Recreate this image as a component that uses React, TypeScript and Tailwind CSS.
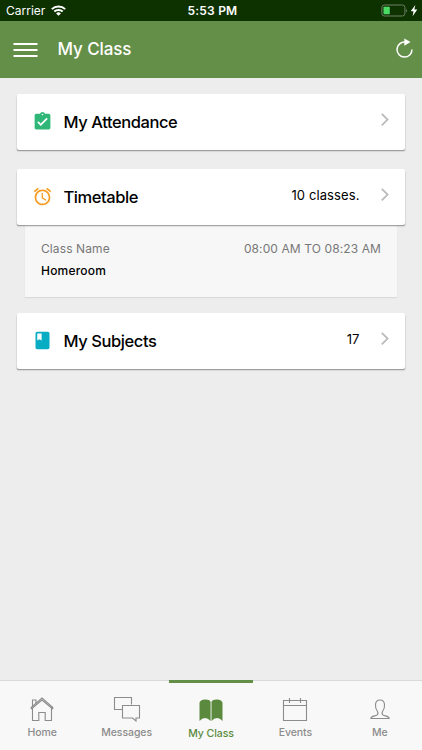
import type { ReactNode } from "react";
import { MdAlarm, MdAssignmentTurnedIn, MdClass } from "react-icons/md";

function Chevron() {
  return (
    <svg className="ml-[20.5px] mt-[18px] h-[15px] w-[10px] shrink-0" viewBox="0 0 10 15" fill="none" stroke="#b9b9b9" strokeWidth="1.7">
      <path d="M1.8 1.8 7.6 7.6 1.8 13.4" />
    </svg>
  );
}

function Card({ icon, title, value }: { icon: ReactNode; title: string; value?: string }) {
  return (
    <section className="relative flex h-[56px] items-start rounded-[2px] bg-white pl-[15.5px] pr-[15px] shadow-[0_1.5px_1.5px_-0.5px_rgba(0,0,0,0.42)]">
      <span className="mt-[17px] flex h-[21px] w-[21px] shrink-0">{icon}</span>
      <h2 className="ml-[10.5px] mt-[16px] flex-1 whitespace-nowrap text-[16.5px] font-[450] leading-[24px] tracking-[-0.42px] text-black">{title}</h2>
      {value && <span className="mt-[16px] whitespace-nowrap text-[13px] leading-[20px] tracking-[0.1px] text-black">{value}</span>}
      <Chevron />
    </section>
  );
}

function Tab({ label, children, active = false }: { label: string; children: ReactNode; active?: boolean }) {
  return (
    <button className={active ? "-mt-px flex flex-1 flex-col items-center border-t-[3px] border-[#648f49] pt-[12px] text-[#5b8a3e]" : "flex flex-1 flex-col items-center pt-[13px] text-[#8c8c8c]"}>
      <svg className="h-[28px] w-[28px]" viewBox="0 0 28 28" fill="none" stroke="currentColor" strokeWidth="1.1">
        {children}
      </svg>
      <span className="mt-[4px] whitespace-nowrap text-[10.5px] font-medium leading-[14px] tracking-[-0.05px]">{label}</span>
    </button>
  );
}

export default function App() {
  return (
    <div className="flex h-[750px] w-[422px] flex-col overflow-hidden bg-[#ededed] font-['Inter','Liberation_Sans',sans-serif] text-[#111]">
      <div className="grid h-[21px] shrink-0 grid-cols-3 items-center bg-[#0d3200] text-[12px] text-white">
        <div className="flex items-center pl-[6px]">
          <span>Carrier</span>
          <svg className="ml-[6px] h-[11px] w-[15px]" viewBox="0 0 15 11" fill="none" stroke="white" strokeWidth="2">
            <path d="M.8 4.1a9.6 9.6 0 0 1 13.4 0M3.3 6.6a6.1 6.1 0 0 1 8.4 0" />
            <path d="M7.5 10.8 5.1 8.4a3.5 3.5 0 0 1 4.8 0Z" fill="white" stroke="none" />
          </svg>
        </div>
        <span className="whitespace-nowrap pl-[3px] text-center text-[12px] font-semibold tracking-[0.2px]">5:53 PM</span>
        <div className="flex items-center justify-end pr-[4px]">
          <svg className="h-[13px] w-[37px]" viewBox="0 0 37 13">
            <rect x=".9" y="1" width="23" height="11" rx="2.5" fill="none" stroke="#6d8068" />
            <rect x="2.5" y="2.7" width="6.3" height="7.5" rx=".7" fill="#4cd964" />
            <path d="M25.2 4.5q1.800 2 0 4Z" fill="#6d8068" />
            <path d="M34.3 1 29.700 7.200h2.800l-.9 5L36.300 5.500h-2.900Z" fill="white" />
          </svg>
        </div>
      </div>
      <header className="flex h-[57px] shrink-0 items-center bg-[#648f49] pl-[13px] pr-[9px] text-white">
        <svg className="h-[16px] w-[25px]" viewBox="0 0 25 16" stroke="white" strokeWidth="1.8">
          <path d="M.5 2h24M.5 8h24M.5 14h24" />
        </svg>
        <h1 className="-mt-px ml-[19.5px] flex-1 text-[17px] font-medium leading-[24px] tracking-[-0.1px]">My Class</h1>
        <svg className="mt-[-3px] h-[20px] w-[18px]" viewBox="0 0 18 20" fill="none" stroke="white" strokeWidth="1.5">
          <path d="M9.8 4.1A7.500 7.500 0 1 0 17 11.600" />
          <path d="M9.300.6 15.500 4.100 9.300 7.700Z" fill="white" stroke="none" />
        </svg>
      </header>
      <main className="flex flex-1 flex-col pl-[16.5px] pr-[17px] pt-[16px]">
        <Card icon={<MdAssignmentTurnedIn size={21} color="#30b777" />} title="My Attendance" />
        <div className="mt-[19px]">
          <Card icon={<MdAlarm size={21} color="#f59d22" />} title="Timetable" value="10 classes." />
          <div className="mx-[8px] h-[71.5px] bg-[#f7f7f7] pl-[16.5px] pr-[16px] pt-[14px] shadow-[0_1px_1px_rgba(0,0,0,0.08)]">
            <div className="flex justify-between whitespace-nowrap text-[12px] leading-[20px] tracking-[0.1px] text-[#777]">
              <span>Class Name</span>
              <span>08:00 AM TO 08:23 AM</span>
            </div>
            <p className="mt-[2px] text-[12px] font-medium leading-[20px] tracking-[0.2px] text-black">Homeroom</p>
          </div>
        </div>
        <div className="mt-[16.5px]">
          <Card icon={<MdClass size={21} color="#09adc3" />} title="My Subjects" value="17" />
        </div>
      </main>
      <nav className="flex h-[70px] shrink-0 border-t border-[#d9d9d9] bg-[#f8f8f8]">
        <Tab label="Home">
          <path d="M3.200 13.300 14 4l10.800 9.300M3.200 15 14 6l10.800 9M3.200 13.300V15M24.800 13.300V15M4.500 14.500v12h6.300v-8h6.400v8h6.300v-12M4.500 12V6h3.500v3" />
        </Tab>
        <Tab label="Messages">
          <path d="M9.500 15.500h-8v-12h17v7M9.500 11.500h17v12.500H23v3L19.500 24h-10Z" />
        </Tab>
        <Tab label="My Class" active>
          <path transform="translate(0 -.6)" d="M2.500 26.500V8Q4 4.700 8.500 5 12.500 5 13.600 7.300V26.500Q11 23.700 8 23.500 5 23.700 2.500 26.500ZM14.500 26.500V7.300Q15.700 5 19.500 5 24 4.700 25.500 8V26.500Q23 23.700 20 23.500 17 23.700 14.500 26.500Z" fill="currentColor" stroke="none" />
        </Tab>
        <Tab label="Events">
          <path d="M2.500 6.500h23v20h-23ZM2.500 11.500h23M8.500 4v5M19.500 4v5" />
        </Tab>
        <Tab label="Me">
          <path d="M4.800 24.500c.2-2.500 3.700-2.300 6.200-3.500 1.500-1 1-2.700.2-4-1.500-2-1.900-4.300-1.700-6.500.2-2.600 1.900-4.500 4.500-4.500s4.300 1.900 4.500 4.500c.2 2.200-.2 4.500-1.700 6.500-.8 1.300-1.300 3 .2 4 2.500 1.200 6 1 6.200 3.500Z" />
        </Tab>
      </nav>
    </div>
  );
}
